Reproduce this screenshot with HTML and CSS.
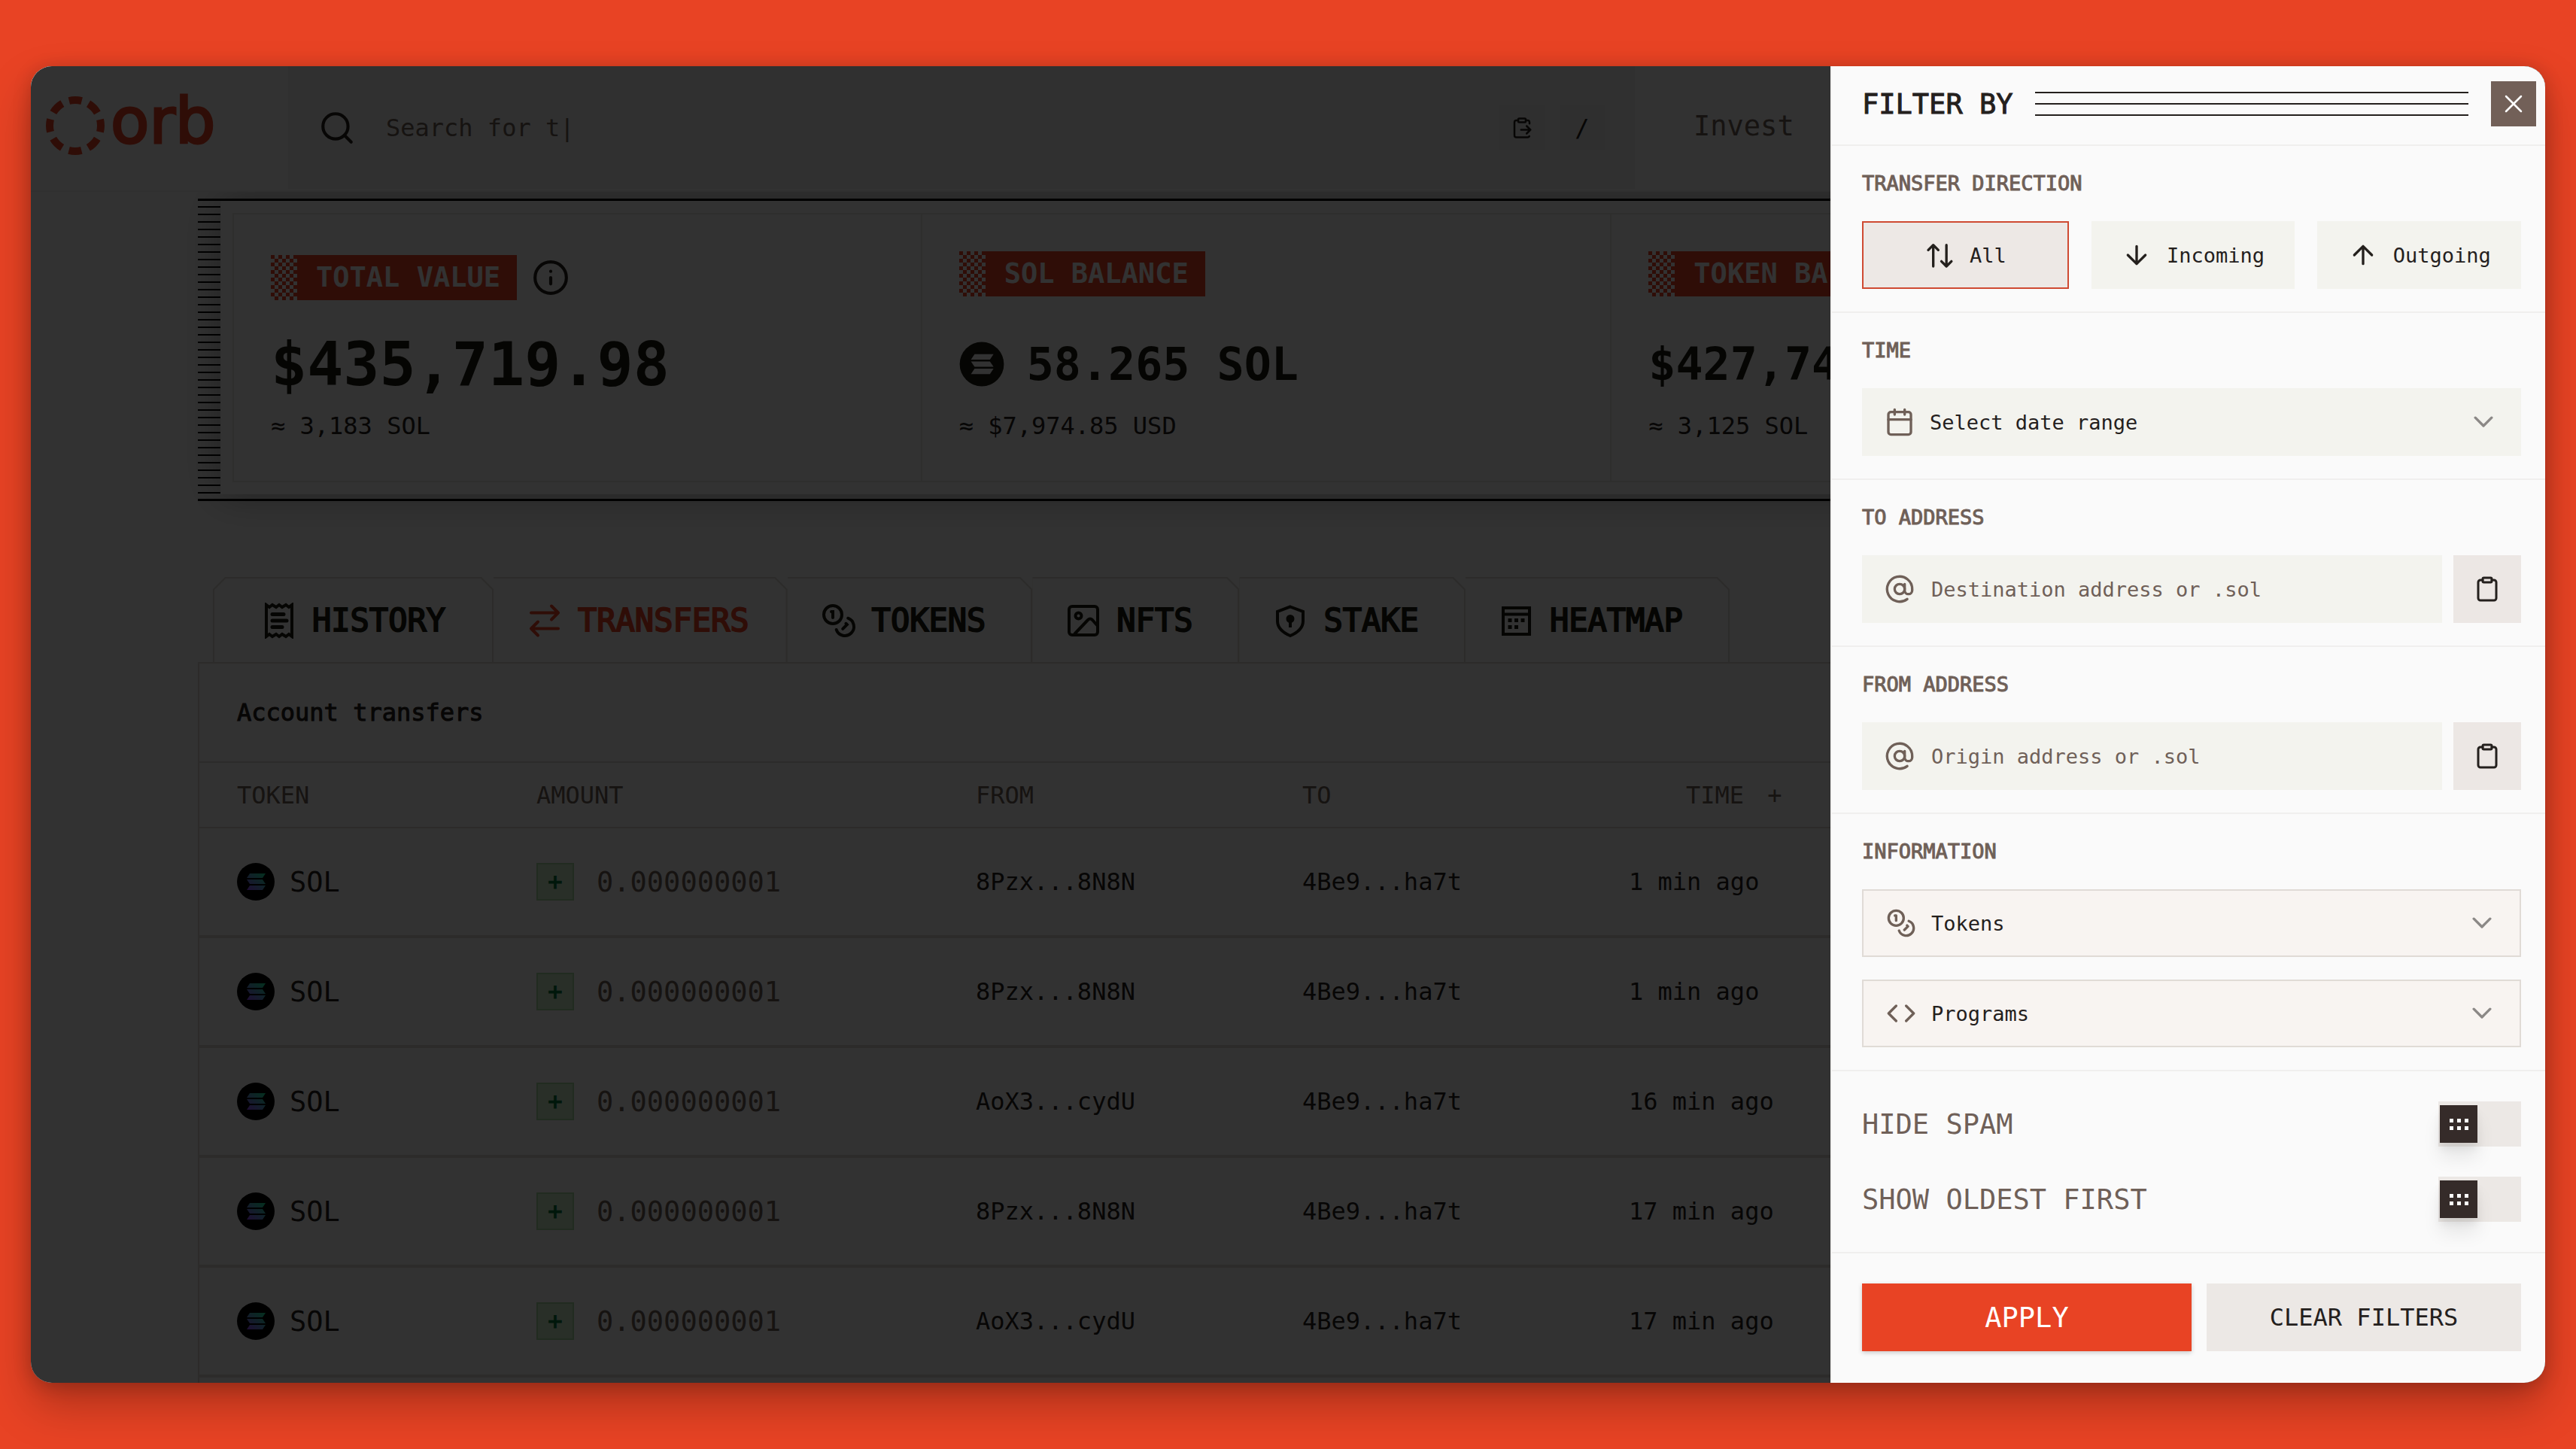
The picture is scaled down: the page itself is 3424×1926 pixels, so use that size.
FILE: index.html
```html
<!DOCTYPE html>
<html lang="en">
<head>
    <meta charset="UTF-8">
    <meta name="viewport" content="width=device-width, initial-scale=1.0">
    <title>Orb - Account transfers</title>
    <link rel="stylesheet" href="styles.css">
</head>
<body>
    <!-- shared icons -->
    <svg class="sprite" aria-hidden="true">
        <linearGradient id="sol-gradient" x1="0" y1="1" x2="1" y2="0">
            <stop offset="0" stop-color="#9945ff"/>
            <stop offset="1" stop-color="#14f195"/>
        </linearGradient>
        <symbol id="sol-bars" viewBox="0 0 50 50">
            <path d="M17 14h21l-4 6H13zM13 22h21l4 6H17zM17 30h21l-4 6H13z"/>
        </symbol>
        <symbol id="sol" viewBox="0 0 50 50">
            <circle cx="25" cy="25" r="25" fill="#000"/>
            <path d="M17 14h21l-4 6H13zM13 22h21l4 6H17zM17 30h21l-4 6H13z" fill="url(#sol-gradient)"/>
        </symbol>
        <symbol id="coins" viewBox="0 0 24 24">
            <circle cx="8" cy="8" r="6"/>
            <path d="M18.09 10.37A6 6 0 1 1 10.34 18M7 6h1v4M16.71 13.88l.7.71-2.82 2.82"/>
        </symbol>
        <symbol id="at" viewBox="0 0 24 24">
            <circle cx="12" cy="12" r="4"/>
            <path d="M16 8v5a3 3 0 0 0 6 0v-1a10 10 0 1 0-4 8"/>
        </symbol>
        <symbol id="clipboard" viewBox="0 0 24 24">
            <rect x="8" y="2" width="8" height="4" rx="1"/>
            <path d="M16 4h2a2 2 0 0 1 2 2v14a2 2 0 0 1-2 2H6a2 2 0 0 1-2-2V6a2 2 0 0 1 2-2h2"/>
        </symbol>
        <symbol id="chevron" viewBox="0 0 24 24">
            <path d="M5.5 8.5 12 15l6.5-6.5"/>
        </symbol>
    </svg>

    <div class="window">
        <div class="page">
            <header class="topbar">
                <a class="logo" href="#">
                    <svg class="logo-ring" viewBox="0 0 78 78" aria-hidden="true">
                        <circle cx="39" cy="39" r="34" fill="none" stroke="currentColor" stroke-width="10" stroke-dasharray="17 9.7" stroke-dashoffset="8.5"/>
                    </svg>
                    <span class="logo-name">orb</span>
                </a>
                <div class="search">
                    <svg class="icon icon-lg" viewBox="0 0 24 24" aria-hidden="true"><circle cx="11" cy="11" r="8"/><path d="m21 21-4.3-4.3"/></svg>
                    <input class="search-input" type="text" placeholder="Search for t|" aria-label="Search">
                    <button class="key" type="button" aria-label="Paste">
                        <svg class="icon icon-xs" viewBox="0 0 24 24" aria-hidden="true"><path d="M11 14h10M16 4h2a2 2 0 0 1 2 2v1.34M17 18l4-4-4-4M8 4H6a2 2 0 0 0-2 2v14a2 2 0 0 0 2 2h12a2 2 0 0 0 1.8-1.1"/><rect x="8" y="2" width="8" height="4" rx="1"/></svg>
                    </button>
                    <kbd class="key">/</kbd>
                </div>
                <nav class="nav"><a href="#">Invest</a></nav>
            </header>

            <main class="content">
                <section class="summary">
                    <div class="summary-cards">
                        <div class="card">
                            <div class="card-head card-head-info">
                                <h2 class="badge">TOTAL VALUE</h2>
                                <svg class="icon icon-lg" viewBox="0 0 24 24" aria-hidden="true"><circle cx="12" cy="12" r="10"/><path d="M12 16v-4M12 8h.01"/></svg>
                            </div>
                            <p class="value value-lg">$435,719.98</p>
                            <p class="approx">≈ 3,183 SOL</p>
                        </div>
                        <div class="card">
                            <div class="card-head"><h2 class="badge">SOL BALANCE</h2></div>
                            <p class="value">
                                <svg class="value-icon" viewBox="0 0 50 50" aria-hidden="true"><circle cx="25" cy="25" r="24.5"/><use href="#sol-bars" fill="#faf9f9"/></svg>
                                58.265 SOL
                            </p>
                            <p class="approx">≈ $7,974.85 USD</p>
                        </div>
                        <div class="card">
                            <div class="card-head"><h2 class="badge">TOKEN BA</h2></div>
                            <p class="value">$427,74</p>
                            <p class="approx">≈ 3,125 SOL</p>
                        </div>
                    </div>
                </section>

                <nav class="tabs">
                    <a class="tab" href="#">
                        <svg class="tab-icon" viewBox="0 0 48 48" aria-hidden="true"><path d="m7 3 4 3 4-3 5 3 4-3 4 3 5-3 4 3 4-3v42l-4-3-4 3-5-3-4 3-4-3-5 3-4-3-4 3z"/><path d="M15 15.5h15M15 24h19M15 32.5h13" stroke-width="5" stroke-linecap="round"/></svg>
                        HISTORY
                    </a>
                    <a class="tab tab-active" href="#" aria-current="page">
                        <svg class="tab-icon" viewBox="0 0 48 48" aria-hidden="true"><path d="M6 13.5h36M33 4.5l9 9-9 9M42 34.5H6M15 25.5l-9 9 9 9" stroke-linecap="round" stroke-linejoin="round"/></svg>
                        TRANSFERS
                    </a>
                    <a class="tab" href="#">
                        <svg class="tab-icon tab-coins" viewBox="0 0 24 24" aria-hidden="true"><use href="#coins"/></svg>
                        TOKENS
                    </a>
                    <a class="tab" href="#">
                        <svg class="tab-icon" viewBox="0 0 48 48" aria-hidden="true"><rect x="5" y="5" width="38" height="38" rx="4"/><circle cx="17.5" cy="17.5" r="4"/><path d="m12 42 18-19c2-2 4-2 6 0l7 8" stroke-linejoin="round"/></svg>
                        NFTS
                    </a>
                    <a class="tab" href="#">
                        <svg class="tab-icon" viewBox="0 0 48 48" aria-hidden="true"><path d="m24 5.5 17 6.5v12.5C41 33 34.5 39.5 24 44 13.5 39.5 7 33 7 24.500V12z"/><circle cx="24" cy="21.500" r="3.500" fill="currentColor"/><path d="M24 22v11"/></svg>
                        STAKE
                    </a>
                    <a class="tab" href="#">
                        <svg class="tab-icon" viewBox="0 0 48 48" aria-hidden="true"><path d="M6 7h35v35H6zM6 15.500h35"/><path d="M12.500 23.500h22" stroke-width="5" stroke-dasharray="5 3.500"/><path d="M12.500 32.500h13.500" stroke-width="5" stroke-dasharray="5 3.500"/></svg>
                        HEATMAP
                    </a>
                </nav>

                <section class="transfers">
                    <h1 class="transfers-title">Account transfers</h1>
                    <table class="table">
                        <colgroup>
                            <col class="col-token">
                            <col class="col-amount">
                            <col class="col-address">
                            <col class="col-address">
                            <col>
                        </colgroup>
                        <thead>
                            <tr>
                                <th>TOKEN</th>
                                <th>AMOUNT</th>
                                <th>FROM</th>
                                <th>TO</th>
                                <th class="time-head">TIME <span class="time-plus">+</span></th>
                            </tr>
                        </thead>
                        <tbody>
                            <tr>
                                <td><span class="token"><svg class="token-icon" aria-hidden="true"><use href="#sol"/></svg>SOL</span></td>
                                <td><span class="amount"><span class="sign">+</span>0.000000001</span></td>
                                <td>8Pzx...8N8N</td>
                                <td>4Be9...ha7t</td>
                                <td>1 min ago</td>
                            </tr>
                            <tr>
                                <td><span class="token"><svg class="token-icon" aria-hidden="true"><use href="#sol"/></svg>SOL</span></td>
                                <td><span class="amount"><span class="sign">+</span>0.000000001</span></td>
                                <td>8Pzx...8N8N</td>
                                <td>4Be9...ha7t</td>
                                <td>1 min ago</td>
                            </tr>
                            <tr>
                                <td><span class="token"><svg class="token-icon" aria-hidden="true"><use href="#sol"/></svg>SOL</span></td>
                                <td><span class="amount"><span class="sign">+</span>0.000000001</span></td>
                                <td>AoX3...cydU</td>
                                <td>4Be9...ha7t</td>
                                <td>16 min ago</td>
                            </tr>
                            <tr>
                                <td><span class="token"><svg class="token-icon" aria-hidden="true"><use href="#sol"/></svg>SOL</span></td>
                                <td><span class="amount"><span class="sign">+</span>0.000000001</span></td>
                                <td>8Pzx...8N8N</td>
                                <td>4Be9...ha7t</td>
                                <td>17 min ago</td>
                            </tr>
                            <tr>
                                <td><span class="token"><svg class="token-icon" aria-hidden="true"><use href="#sol"/></svg>SOL</span></td>
                                <td><span class="amount"><span class="sign">+</span>0.000000001</span></td>
                                <td>AoX3...cydU</td>
                                <td>4Be9...ha7t</td>
                                <td>17 min ago</td>
                            </tr>
                        </tbody>
                    </table>
                </section>
            </main>
        </div>

        <div class="overlay"></div>

        <!-- filter drawer -->
        <aside class="drawer">
            <div class="drawer-head">
                <h2 class="drawer-title">FILTER BY</h2>
                <div class="drawer-lines"></div>
                <button class="close" type="button" aria-label="Close">
                    <svg class="icon" viewBox="0 0 24 24" aria-hidden="true"><path d="M6 6l12 12M18 6 6 18"/></svg>
                </button>
            </div>

            <div class="section">
                <h3 class="section-title">TRANSFER DIRECTION</h3>
                <div class="row directions">
                    <button class="direction direction-active" type="button">
                        <svg class="icon" viewBox="0 0 24 24" aria-hidden="true"><path d="M7 21V4M3 8l4-4 4 4M17.5 4v17M13.5 17l4 4 4-4"/></svg>
                        All
                    </button>
                    <button class="direction" type="button">
                        <svg class="icon" viewBox="0 0 24 24" aria-hidden="true"><path d="M12 5v14M5 12l7 7 7-7"/></svg>
                        Incoming
                    </button>
                    <button class="direction" type="button">
                        <svg class="icon" viewBox="0 0 24 24" aria-hidden="true"><path d="M12 19V5M5 12l7-7 7 7"/></svg>
                        Outgoing
                    </button>
                </div>
            </div>

            <div class="section">
                <label class="section-title" for="time">TIME</label>
                <div class="field">
                    <select id="time"><option>Select date range</option></select>
                    <svg class="icon field-icon" viewBox="0 0 24 24" aria-hidden="true"><rect x="3" y="4" width="18" height="18" rx="2"/><path d="M8 2v4M16 2v4M3 10h18"/></svg>
                    <svg class="icon field-chevron" aria-hidden="true"><use href="#chevron"/></svg>
                </div>
            </div>

            <div class="section">
                <label class="section-title" for="to">TO ADDRESS</label>
                <div class="row address">
                    <div class="field">
                        <input id="to" type="text" placeholder="Destination address or .sol">
                        <svg class="icon field-icon" aria-hidden="true"><use href="#at"/></svg>
                    </div>
                    <button class="paste" type="button" aria-label="Paste destination address">
                        <svg class="icon icon-sm" aria-hidden="true"><use href="#clipboard"/></svg>
                    </button>
                </div>
            </div>

            <div class="section">
                <label class="section-title" for="from">FROM ADDRESS</label>
                <div class="row address">
                    <div class="field">
                        <input id="from" type="text" placeholder="Origin address or .sol">
                        <svg class="icon field-icon" aria-hidden="true"><use href="#at"/></svg>
                    </div>
                    <button class="paste" type="button" aria-label="Paste origin address">
                        <svg class="icon icon-sm" aria-hidden="true"><use href="#clipboard"/></svg>
                    </button>
                </div>
            </div>

            <div class="section">
                <h3 class="section-title">INFORMATION</h3>
                <div class="stack">
                    <div class="field field-outlined">
                        <select aria-label="Tokens"><option>Tokens</option></select>
                        <svg class="icon field-icon" aria-hidden="true"><use href="#coins"/></svg>
                        <svg class="icon field-chevron" aria-hidden="true"><use href="#chevron"/></svg>
                    </div>
                    <div class="field field-outlined">
                        <select aria-label="Programs"><option>Programs</option></select>
                        <svg class="icon field-icon" viewBox="0 0 24 24" aria-hidden="true"><path d="m16 18 6-6-6-6M8 6l-6 6 6 6"/></svg>
                        <svg class="icon field-chevron" aria-hidden="true"><use href="#chevron"/></svg>
                    </div>
                </div>
            </div>

            <div class="section toggles">
                <label class="toggle">HIDE SPAM <input type="checkbox"></label>
                <label class="toggle">SHOW OLDEST FIRST <input type="checkbox"></label>
            </div>

            <div class="drawer-foot">
                <button class="btn btn-primary" type="button">APPLY</button>
                <button class="btn btn-secondary" type="button">CLEAR FILTERS</button>
            </div>
        </aside>
    </div>
</body>
</html>
```
FILE: styles.css
```css
*, *::before, *::after {
    margin: 0;
    padding: 0;
    box-sizing: border-box;
}

:root {
    --orange: #e84324;
    --bg: #fafafa;
    --ink: #24201d;
    --brown: #6f6058;
    --line: #dad8d2;
}

body {
    min-height: 100vh;
    padding: 88px 41px;
    background-color: var(--orange);
    color: var(--ink);
    font-family: 'DejaVu Sans Mono', 'Liberation Mono', monospace;
    font-size: 32px;
}

button, input, select, kbd {
    font: inherit;
    color: inherit;
    border: 0;
    border-radius: 0;
    background: none;
    outline: none;
}

a {
    color: inherit;
    text-decoration: none;
}

.sprite {
    position: absolute;
    width: 0;
    height: 0;
}

.icon {
    flex: none;
    width: 40px;
    height: 40px;
    fill: none;
    stroke: currentColor;
    stroke-width: 1.5;
    stroke-linecap: round;
    stroke-linejoin: round;
}

.icon-xs {
    width: 30px;
    height: 30px;
    stroke-width: 2;
}

.icon-sm {
    width: 36px;
    height: 36px;
}

.icon-lg {
    width: 50px;
    height: 50px;
    stroke-width: 2;
}

/* page, overlay and drawer share one grid cell */
.window {
    display: grid;
    overflow: hidden;
    border-radius: 28px;
    background-color: var(--bg);
    box-shadow: 0 30px 60px rgba(0, 0, 0, 0.25), 0 4px 24px rgba(0, 0, 0, 0.2);
}

.page, .overlay, .drawer {
    grid-area: 1 / 1;
    min-width: 0;
}

.page {
    display: flex;
    flex-direction: column;
}

.overlay {
    z-index: 2;
    background-color: rgba(0, 0, 0, 0.8);
}

/* top bar */
.topbar {
    position: relative;
    z-index: 1;
    display: flex;
    height: 167px;
    padding-bottom: 2px;
    border-bottom: 2px solid #f0efee;
    background-color: var(--bg);
}

.logo {
    display: flex;
    align-items: center;
    gap: 8px;
    width: 342px;
    padding: 0 20px 6px;
    color: var(--orange);
}

.logo-ring {
    width: 78px;
    height: 78px;
}

.logo-name {
    padding-bottom: 12px;
    font-family: 'DejaVu Sans', sans-serif;
    font-size: 84px;
    line-height: 84px;
    -webkit-text-stroke: 3px currentColor;
}

.search {
    display: flex;
    align-items: center;
    gap: 20px;
    width: 1790px;
    padding: 0 40px;
    background-color: #f0f0ef;
}

.search-input {
    flex: 1;
    min-width: 0;
    margin-left: 20px;
}

.search-input::placeholder {
    color: var(--brown);
    opacity: 1;
}

.key {
    display: flex;
    align-items: center;
    justify-content: center;
    width: 60px;
    height: 60px;
    background-color: #ebebe9;
}

.nav {
    display: flex;
    align-items: center;
    padding: 0 78px 4px;
    color: var(--brown);
    font-size: 37px;
}

/* summary */
.content {
    flex: 1;
    display: flex;
    flex-direction: column;
    padding: 9px 278px 0 222px;
}

.summary {
    padding: 0 30px 6px;
    border-top: 3px solid #000;
    border-bottom: 3px solid #000;
    background: repeating-linear-gradient(transparent 0 7px, #000 7px 9px, transparent 9px 10px) no-repeat 0 0 / 30px 100%;
}

.summary-cards {
    display: grid;
    grid-template-columns: repeat(3, 1fr);
    padding: 16px;
    background-color: var(--bg);
    box-shadow: 0 0 50px rgba(0, 0, 0, 0.35);
}

.card {
    padding: 49px 49px 53px;
    border: 2px solid #e6e5e2;
    border-left-width: 0;
}

.card:first-child {
    border-left-width: 2px;
}

.card-head {
    display: flex;
    align-items: flex-start;
    height: 70px;
    white-space: nowrap;
}

.card-head-info {
    align-items: center;
    gap: 20px;
}

.badge {
    display: flex;
    color: var(--bg);
    font-size: 37px;
    line-height: 60px;
    padding: 0 22px 0 60px;
    background:
        linear-gradient(var(--orange), var(--orange)) no-repeat 35px 0 / 100% 100%,
        conic-gradient(transparent 25%, var(--orange) 0 50%, transparent 0 75%, var(--orange) 0) 0 0 / 10px 10px;
}

.value {
    display: flex;
    align-items: center;
    gap: 30px;
    height: 100px;
    margin-top: 30px;
    color: #1c1b12;
    font-size: 60px;
    font-weight: bold;
    white-space: nowrap;
}

.value-lg {
    font-size: 80px;
}

.value-icon {
    width: 60px;
    height: 60px;
    fill: currentColor;
}

.approx {
    margin-top: 12px;
    line-height: 40px;
}

/* tabs */
.tabs {
    display: flex;
    margin-top: 101px;
    padding-left: 20px;
}

.tab {
    position: relative;
    z-index: 0;
    display: flex;
    align-items: center;
    gap: 20px;
    height: 113px;
    padding: 2px 62px 0 44px;
    color: #1c1b12;
    font-size: 42px;
    -webkit-text-stroke: 2px currentColor;
    background-color: var(--line);
    clip-path: polygon(0 0, calc(100% - 16px) 0, 100% 16px, 100% 100%, 0 100%);
}

.tab::before {
    content: '';
    position: absolute;
    z-index: -1;
    inset: 2px 2px 0 0;
    background-color: var(--bg);
    clip-path: polygon(0 0, calc(100% - 15px) 0, 100% 15px, 100% 100%, 0 100%);
}

.tab:first-child {
    padding: 2px 64px 0;
    clip-path: polygon(16px 0, calc(100% - 16px) 0, 100% 16px, 100% 100%, 0 100%, 0 16px);
}

.tab:first-child::before {
    inset: 2px 2px 0 2px;
    clip-path: polygon(15px 0, calc(100% - 15px) 0, 100% 15px, 100% 100%, 0 100%, 0 15px);
}

.tab-active {
    padding-right: 51px;
    color: var(--orange);
}

.tab-icon {
    width: 48px;
    height: 48px;
    fill: none;
    stroke: currentColor;
    stroke-width: 4;
}

.tab-coins {
    stroke-width: 2;
    stroke-linecap: round;
}

/* transfers table */
.transfers {
    flex: 1;
    border: 2px solid var(--line);
    border-bottom: 0;
}

.transfers-title {
    padding-left: 50px;
    font-size: 32px;
    font-weight: normal;
    line-height: 130px;
    -webkit-text-stroke: 1px currentColor;
    border-bottom: 2px solid var(--line);
}

.table {
    width: 100%;
    table-layout: fixed;
    border-collapse: separate;
    border-spacing: 0;
    white-space: nowrap;
}

.col-token {
    width: 448px;
}

.col-amount {
    width: 584px;
}

.col-address {
    width: 434px;
}

.table th {
    height: 87px;
    color: var(--brown);
    font-weight: normal;
    text-align: left;
    border-bottom: 2px solid var(--line);
}

.table td {
    height: 146px;
    border-bottom: 4px solid var(--line);
}

.table th:first-child, .table td:first-child {
    padding-left: 50px;
}

.table .time-head {
    padding-left: 76px;
}

.time-plus {
    margin-left: 12px;
}

.token, .amount {
    display: flex;
    align-items: center;
    gap: 20px;
    font-size: 37px;
}

.token-icon {
    width: 50px;
    height: 50px;
}

.amount {
    gap: 30px;
    color: var(--brown);
}

.sign {
    display: flex;
    align-items: center;
    justify-content: center;
    width: 50px;
    height: 50px;
    color: #00753a;
    font-size: 32px;
    -webkit-text-stroke: 1px currentColor;
    border: 2px solid #a5d6a0;
    background-color: #cbeac6;
}

/* filter drawer */
.drawer {
    z-index: 3;
    justify-self: end;
    width: 950px;
    max-width: 100%;
    border-left: 2px solid #f2f1f0;
    background-color: var(--bg);
    font-size: 27px;
}

.drawer-head {
    display: flex;
    align-items: center;
    gap: 30px;
    padding: 20px 12px 24px 40px;
    border-bottom: 2px solid #f0efee;
}

.drawer-title {
    font-size: 37px;
    font-weight: normal;
    -webkit-text-stroke: 1px currentColor;
}

.drawer-lines {
    flex: 1;
    height: 32px;
    background: repeating-linear-gradient(var(--ink) 0 2px, transparent 2px 15px);
}

.close {
    display: flex;
    align-items: center;
    justify-content: center;
    width: 60px;
    height: 60px;
    color: #fff;
    background-color: #726058;
}

.section {
    padding: 32px 32px 30px 40px;
    border-bottom: 2px solid #f0efee;
}

.section-title {
    display: block;
    margin-bottom: 32px;
    color: var(--brown);
    font-size: 27px;
    font-weight: normal;
    line-height: 36px;
    -webkit-text-stroke: 1px currentColor;
}

.row {
    display: flex;
}

.directions {
    gap: 30px;
}

.direction {
    flex: 1 1 0;
    display: flex;
    align-items: center;
    justify-content: center;
    gap: 20px;
    height: 90px;
    background-color: #f3f3ee;
}

.direction .icon {
    stroke-width: 2;
}

.direction-active {
    border: 2px solid #cf4a32;
    background-color: #ede8e5;
}

.address {
    gap: 15px;
}

.field {
    flex: 1;
    display: grid;
    grid-template-columns: 40px 1fr 40px;
    align-items: center;
    height: 90px;
    background-color: #f3f3ee;
}

.field > * {
    grid-row: 1;
}

.field select, .field input {
    grid-column: 1 / -1;
    width: 100%;
    height: 100%;
    padding: 0 90px;
    appearance: none;
}

.field input {
    padding-left: 92px;
}

.field input::placeholder {
    color: var(--brown);
    opacity: 1;
}

.field-icon {
    grid-column: 1;
    margin-left: 30px;
    color: var(--brown);
    stroke-width: 2;
    pointer-events: none;
}

.field-chevron {
    grid-column: 3;
    justify-self: end;
    margin-right: 30px;
    color: #8b8886;
    stroke-width: 2;
    pointer-events: none;
}

.field-outlined {
    border: 2px solid #e0dbd6;
    background-color: #f8f4f1;
}

.paste {
    display: flex;
    align-items: center;
    justify-content: center;
    width: 90px;
    height: 90px;
    background-color: #ece7e4;
}

.paste .icon {
    stroke-width: 2;
}

.stack {
    display: grid;
    gap: 30px;
}

.toggles {
    display: grid;
    gap: 40px;
    padding-top: 40px;
    padding-bottom: 40px;
}

.toggle {
    display: flex;
    align-items: center;
    justify-content: space-between;
    color: var(--brown);
    font-size: 37px;
}

.toggle input {
    display: flex;
    align-items: center;
    width: 110px;
    height: 60px;
    padding: 0 2px;
    appearance: none;
    background-color: #ece8e5;
}

/* the knob, with its six dots in the content box */
.toggle input::before {
    content: '';
    width: 50px;
    height: 50px;
    padding: 18px 12px 17px 13px;
    background: conic-gradient(from 270deg at 5px 5px, #fff 90deg, transparent 0) 0 0 / 10px 10px content-box, #352b29;
    box-shadow: 0 20px 25px rgba(0, 0, 0, 0.08), 0 8px 10px rgba(0, 0, 0, 0.06);
}

.toggle input:checked::before {
    margin-left: 56px;
}

.drawer-foot {
    display: flex;
    gap: 20px;
    padding: 40px 32px 42px 40px;
}

.btn {
    flex: 1 1 0;
    height: 90px;
    padding: 0 30px;
    white-space: nowrap;
}

.btn-primary {
    padding: 0 40px;
    color: #fff;
    font-size: 37px;
    background-color: var(--orange);
    box-shadow: 0 2px 6px rgba(0, 0, 0, 0.2);
}

.btn-secondary {
    font-size: 32px;
    background-color: #ece8e5;
}
```
